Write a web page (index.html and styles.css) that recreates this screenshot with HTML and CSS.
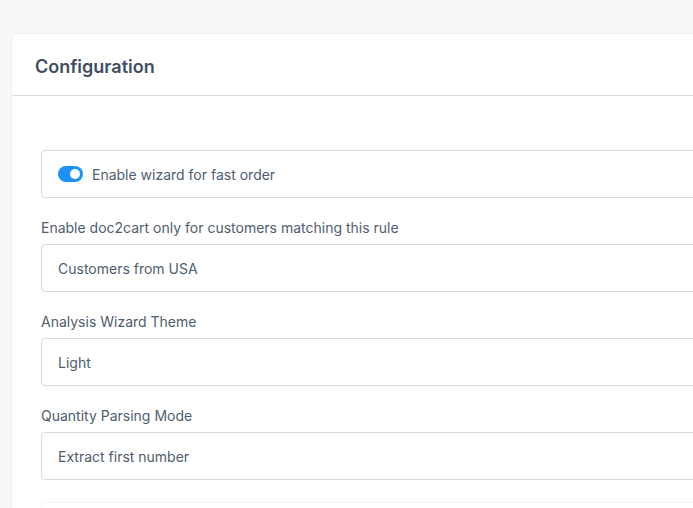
FILE: index.html
```html
<!DOCTYPE html>
<html lang="en">
<head>
<meta charset="utf-8">
<title>Configuration</title>
<link rel="stylesheet" href="styles.css">
</head>
<body>
<div class="card">
  <div class="card-header">
    <h2 class="card-title">Configuration</h2>
  </div>
  <div class="card-body">
    <div class="switch-box">
      <span class="switch"><span class="knob"></span></span>
      <span class="switch-label">Enable wizard for fast order</span>
    </div>
    <div class="field">
      <label class="field-label">Enable doc2cart only for customers matching this rule</label>
      <div class="select">Customers from USA</div>
    </div>
    <div class="field">
      <label class="field-label">Analysis Wizard Theme</label>
      <div class="select">Light</div>
    </div>
    <div class="field">
      <label class="field-label">Quantity Parsing Mode</label>
      <div class="select">Extract first number</div>
    </div>
    <div class="next-box"></div>
  </div>
</div>
</body>
</html>
```
FILE: styles.css
```css
html, body {
  margin: 0;
  padding: 0;
}
body {
  background: #f7f8fa;
  font-family: Inter, "Noto Sans", sans-serif;
  color: #4f5d6e;
  overflow: hidden;
  height: 508px;
}
.card {
  margin: 33px 0 0 11px;
  width: 760px;
  background: #fff;
  border: 1px solid #edf0f3;
  border-radius: 8px;
  box-sizing: border-box;
}
.card-header {
  height: 58px;
  padding: 3px 23px 0;
  display: flex;
  align-items: center;
  border-bottom: 1px solid #d6dee6;
}
.card-title {
  margin: 0;
  font-size: 18px;
  font-weight: 600;
  color: #3f4e60;
}
.card-body {
  padding: 54px 0 0 29px;
  display: flex;
  flex-direction: column;
}
.switch-box {
  height: 48px;
  box-sizing: border-box;
  border: 1px solid #d3dbe3;
  border-radius: 4px;
  display: flex;
  align-items: center;
  padding-left: 16px;
}
.switch {
  width: 25px;
  height: 16px;
  border-radius: 8px;
  background: #1e93f6;
  position: relative;
  margin-right: 9px;
}
.knob {
  position: absolute;
  right: 3px;
  top: 3px;
  width: 10px;
  height: 10px;
  border-radius: 50%;
  background: #fff;
}
.switch-label {
  font-size: 14px;
  color: #4f5d6e;
}
.field {
  margin-top: 20px;
  display: flex;
  flex-direction: column;
}
.field-label {
  font-size: 14px;
  line-height: 20px;
  margin-bottom: 6px;
  color: #4f5d6e;
}
.select {
  height: 48px;
  box-sizing: border-box;
  border: 1px solid #d3dbe3;
  border-radius: 4px;
  display: flex;
  align-items: center;
  padding-left: 16px;
  font-size: 14px;
  color: #4f5d6e;
}
.next-box {
  margin-top: 22px;
  height: 48px;
  border: 1px solid #f2f4f6;
  border-radius: 4px;
}
```
